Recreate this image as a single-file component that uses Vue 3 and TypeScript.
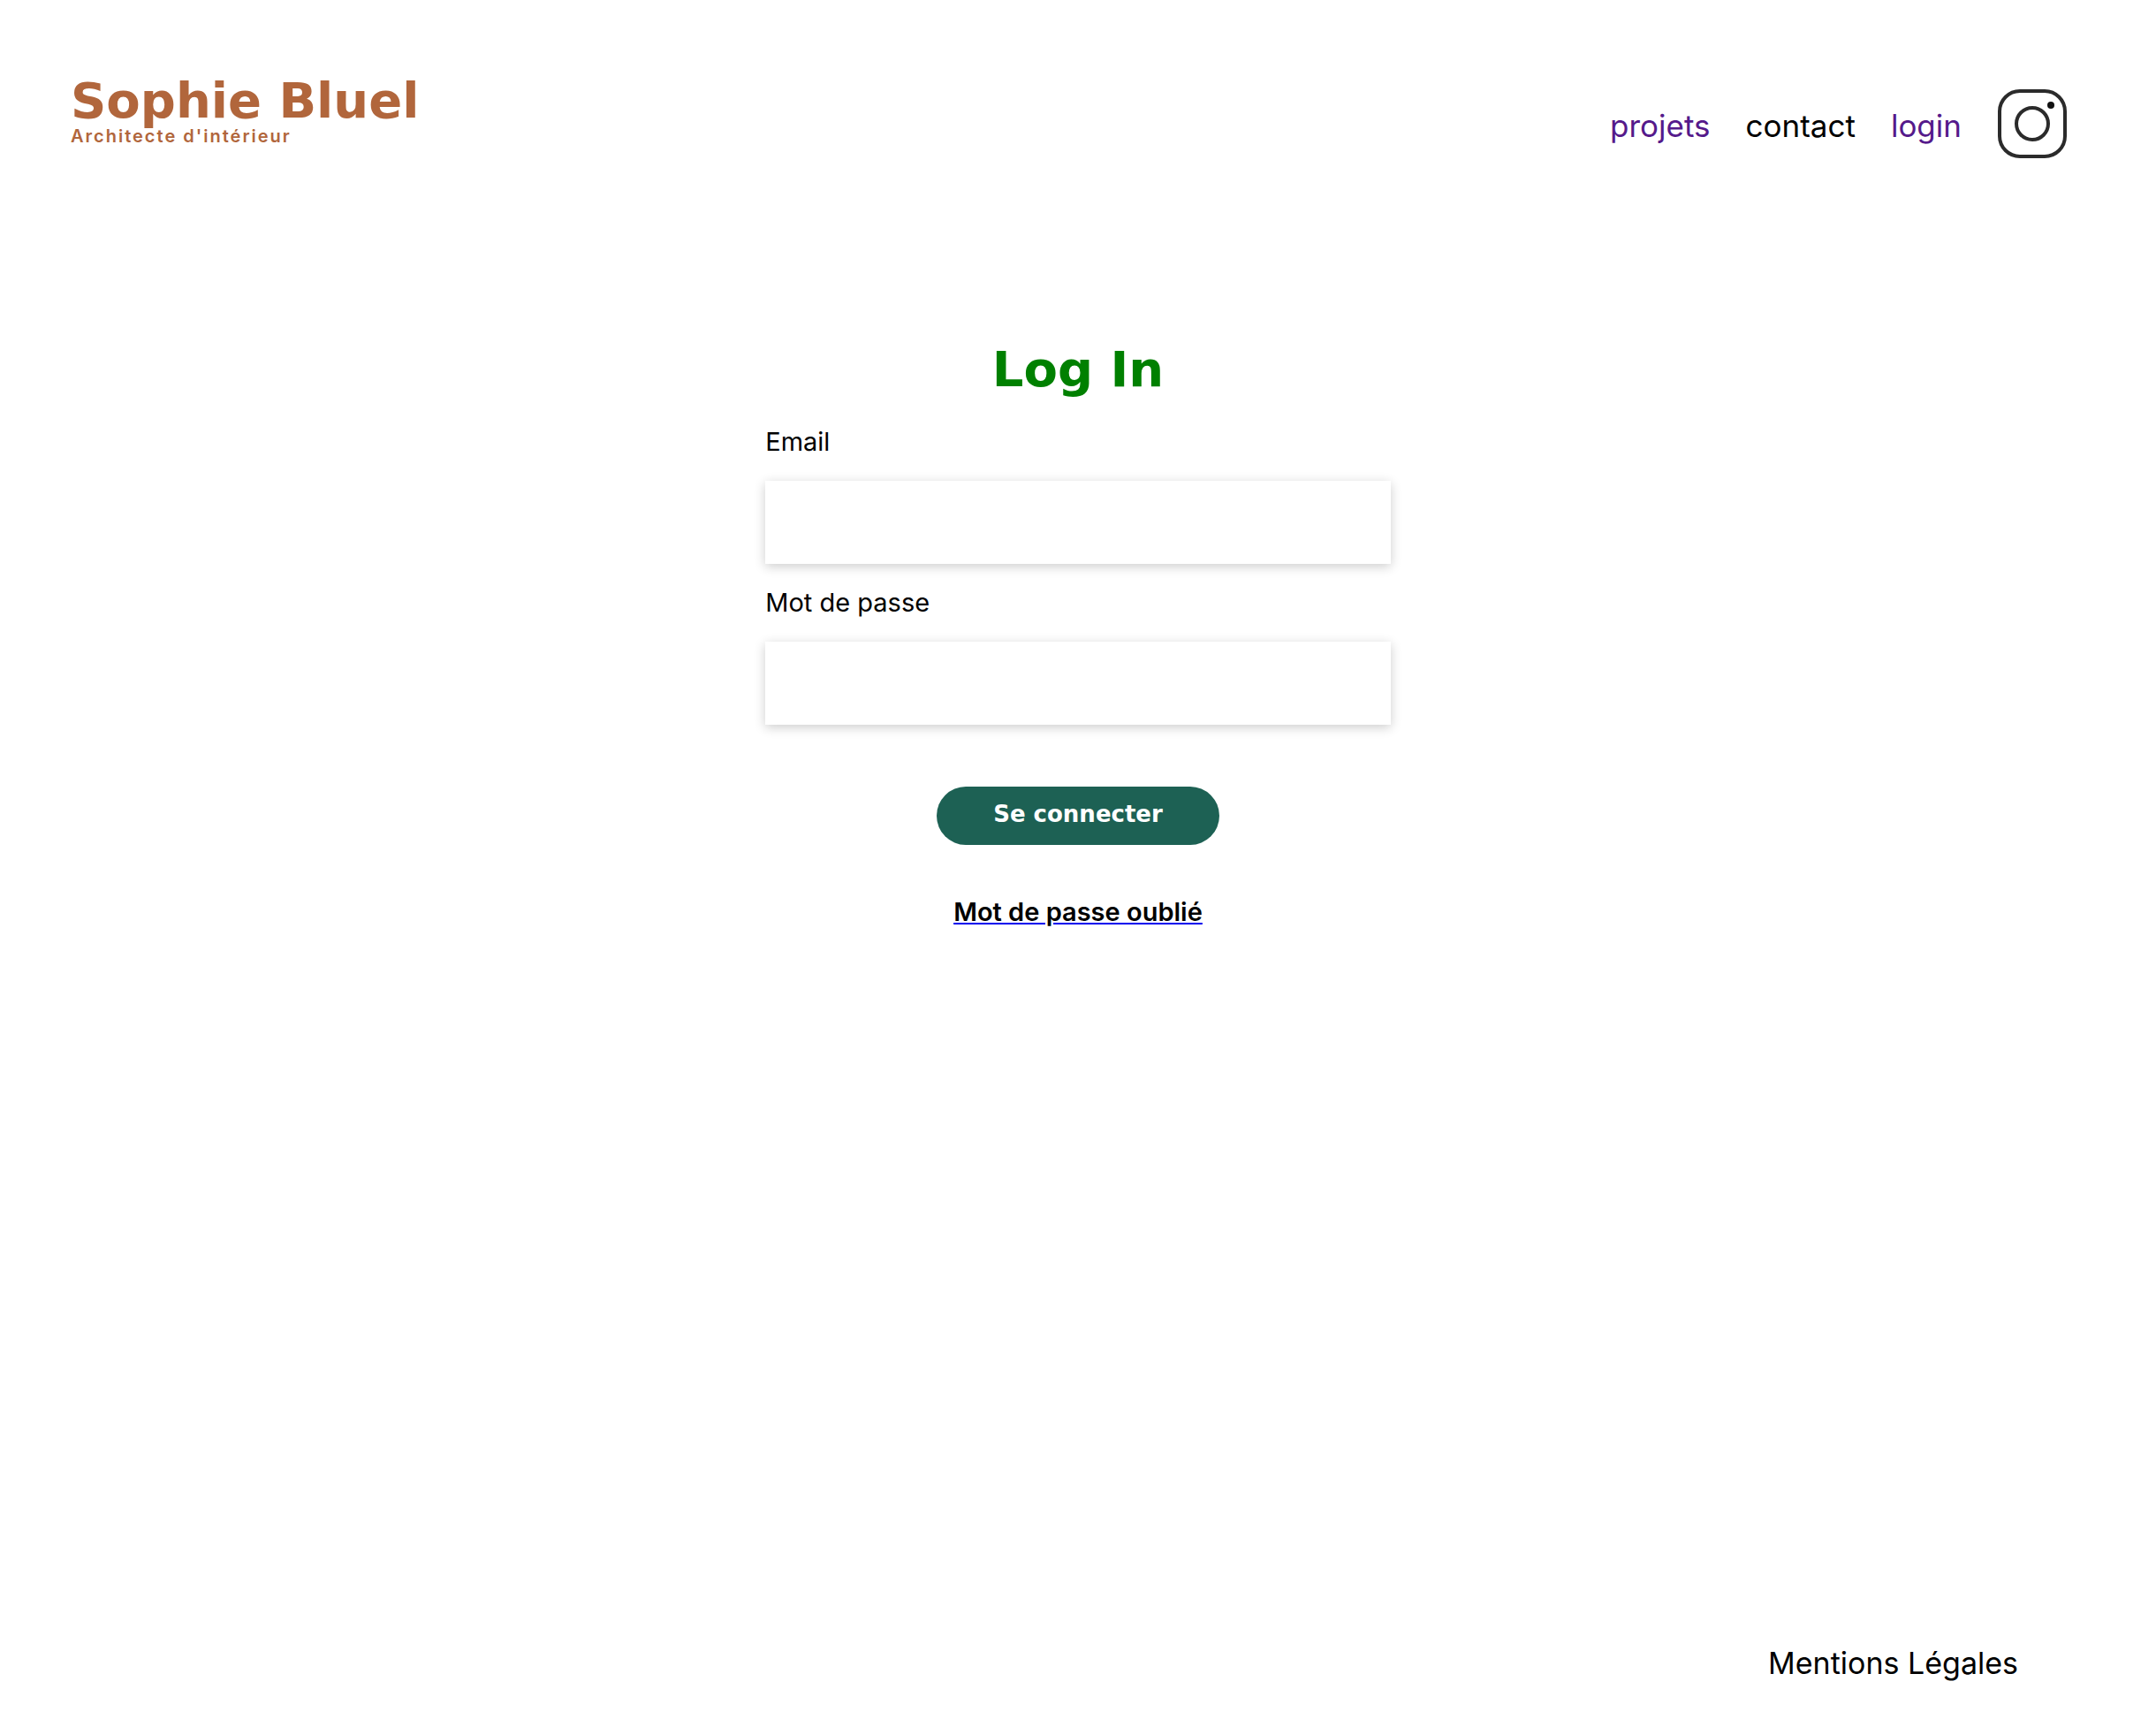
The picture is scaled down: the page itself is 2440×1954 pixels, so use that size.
<script setup lang="ts">
import { ref } from 'vue'

interface NavItem {
  label: string
  href: string
  visited: boolean
}

interface Field {
  id: string
  label: string
  type: string
}

const nav: NavItem[] = [
  { label: 'projets', href: '#projets', visited: true },
  { label: 'contact', href: '#contact', visited: false },
  { label: 'login', href: '#login', visited: true },
]

const fields: Field[] = [
  { id: 'email', label: 'Email', type: 'email' },
  { id: 'password', label: 'Mot de passe', type: 'password' },
]

const values = ref<Record<string, string>>({ email: '', password: '' })
</script>

<template>
  <div class="page">
    <header class="header">
      <h1 class="brand">
        Sophie Bluel
        <span class="tagline">Architecte d'intérieur</span>
      </h1>
      <nav class="nav">
        <a
          v-for="item in nav"
          :key="item.label"
          :href="item.href"
          class="nav-link"
          :class="{ visited: item.visited }"
        >{{ item.label }}</a>
        <a href="#instagram" class="social" aria-label="Instagram">
          <svg viewBox="0 0 80 80" fill="none" stroke="#2b2b2b">
            <rect x="3" y="3" width="74" height="74" rx="23" stroke-width="4" />
            <circle cx="40" cy="40" r="18" stroke-width="4" />
            <circle cx="61" cy="19" r="4" fill="#111" stroke="none" />
          </svg>
        </a>
      </nav>
    </header>

    <main class="main">
      <h2 class="title">Log In</h2>
      <form class="form" @submit.prevent>
        <template v-for="field in fields" :key="field.id">
          <label class="label" :for="field.id">{{ field.label }}</label>
          <input :id="field.id" v-model="values[field.id]" class="input" :type="field.type" />
        </template>
        <button class="submit" type="submit">Se connecter</button>
      </form>
      <a href="#reset" class="forgot"><span>Mot de passe oublié</span></a>
    </main>

    <footer class="footer">
      <a href="#mentions" class="legal">Mentions Légales</a>
    </footer>
  </div>
</template>

<style>
body {
  margin: 0;
  background: #fff;
}
</style>

<style scoped>
.page {
  display: flex;
  flex-direction: column;
  box-sizing: border-box;
  min-height: 100vh;
  color: #000;
  font-family: Inter, "Liberation Sans", sans-serif;
}

.header {
  display: flex;
  align-items: flex-start;
  justify-content: space-between;
  padding: 90px 100px 0 80px;
}

.brand {
  display: flex;
  flex-direction: column;
  gap: 4px;
  margin: 0;
  color: #b1663c;
  font-family: "DejaVu Sans", sans-serif;
  font-size: 56px;
  font-weight: 700;
  line-height: 48px;
}

.tagline {
  font-family: Inter, sans-serif;
  font-size: 20px;
  font-weight: 600;
  line-height: 24px;
  letter-spacing: 2px;
}

.nav {
  display: flex;
  align-items: center;
  gap: 40px;
  padding-top: 10px;
}

.nav-link {
  padding-top: 4px;
  color: #000;
  font-size: 35px;
  line-height: 40px;
  text-decoration: none;
}

.nav-link.visited {
  color: #551a8b;
}

.social,
.social svg {
  display: block;
  width: 80px;
  height: 80px;
}

.main {
  display: flex;
  flex: 1;
  flex-direction: column;
  align-items: center;
  padding-top: 200px;
}

.title {
  margin: 0;
  color: green;
  font-family: "DejaVu Sans", sans-serif;
  font-size: 56px;
  font-weight: 700;
  line-height: 76px;
}

.form {
  display: flex;
  flex-direction: column;
  width: 29%;
}

.label {
  margin-top: 28px;
  font-size: 29px;
  line-height: 32px;
}

.input {
  box-sizing: border-box;
  width: 100%;
  height: 94px;
  margin-top: 28px;
  padding: 0 24px;
  border: 0;
  outline: 0;
  background: #fff;
  box-shadow: 0 3px 12px rgba(0, 0, 0, 0.2);
  font: inherit;
  font-size: 29px;
}

.submit {
  align-self: center;
  width: 320px;
  height: 66px;
  margin-top: 70px;
  padding: 0 0 4px;
  border: 0;
  border-radius: 60px;
  background: #1d6154;
  color: #fff;
  font-family: "DejaVu Sans", sans-serif;
  font-size: 26px;
  font-weight: 700;
}

.forgot {
  margin-top: 60px;
  color: #0000ee;
  font-size: 29px;
  font-weight: 600;
  line-height: 32px;
}

.forgot span {
  color: #000;
}

.footer {
  display: flex;
  justify-content: flex-end;
  padding: 0 156px 52px;
}

.legal {
  color: #000;
  font-size: 34px;
  line-height: 40px;
  text-decoration: none;
}
</style>
